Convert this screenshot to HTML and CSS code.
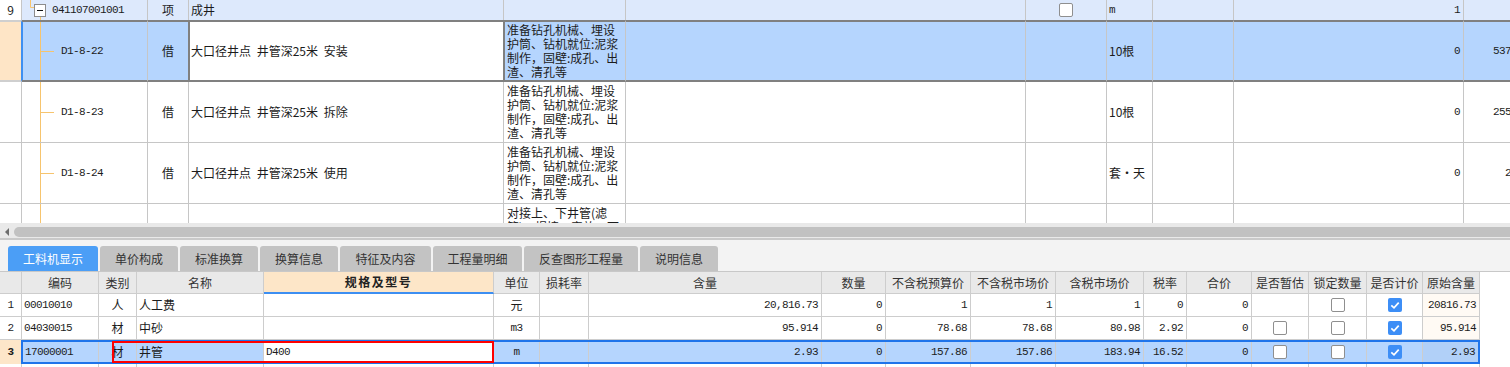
FILE: index.html
```html
<!DOCTYPE html>
<html lang="zh-CN">
<head>
<meta charset="utf-8">
<title>工料机显示</title>
<link rel="stylesheet" href="styles.css">
</head>
<body>
<div class="tgrid">
  <div class="trow r9">
    <div class="c rn">9</div>
    <div class="c root"><svg class="node" width="30" height="20" viewBox="0 0 30 20"><path d="M8.5 0V7.5H12" stroke="#f6c46e" fill="none"/><rect x="12.5" y="4.5" width="11" height="12" fill="#fff" stroke="#8c8c8c"/><path d="M15 10.5H21" stroke="#111"/><path d="M18.5 17V20" stroke="#f6c46e"/></svg><span class="mono">041107001001</span></div>
    <div class="c ctr">项</div>
    <div class="c pl">成井</div>
    <div class="c"></div>
    <div class="c"></div>
    <div class="c ctr"><span class="cb"></span></div>
    <div class="c pl mono">m</div>
    <div class="c"></div>
    <div class="c num mono">1</div>
    <div class="c num mono"></div>
  </div>
  <div class="trow sel">
    <div class="c rn"></div>
    <div class="c tree"><span class="mono">D1-8-22</span></div>
    <div class="c ctr type">借</div>
    <div class="c pl name">大口径井点 井管深25米 安装</div>
    <div class="c desc">准备钻孔机械、埋设<br>护筒、钻机就位:泥浆<br>制作，固壁:成孔、出<br>渣、清孔等</div>
    <div class="c"></div>
    <div class="c"></div>
    <div class="c pl">10根</div>
    <div class="c"></div>
    <div class="c num mono">0</div>
    <div class="c num mono">5375.33</div>
  </div>
  <div class="trow">
    <div class="c rn"></div>
    <div class="c tree"><span class="mono">D1-8-23</span></div>
    <div class="c ctr">借</div>
    <div class="c pl">大口径井点 井管深25米 拆除</div>
    <div class="c desc">准备钻孔机械、埋设<br>护筒、钻机就位:泥浆<br>制作，固壁:成孔、出<br>渣、清孔等</div>
    <div class="c"></div>
    <div class="c"></div>
    <div class="c pl">10根</div>
    <div class="c"></div>
    <div class="c num mono">0</div>
    <div class="c num mono">2557.41</div>
  </div>
  <div class="trow">
    <div class="c rn"></div>
    <div class="c tree"><span class="mono">D1-8-24</span></div>
    <div class="c ctr">借</div>
    <div class="c pl">大口径井点 井管深25米 使用</div>
    <div class="c desc">准备钻孔机械、埋设<br>护筒、钻机就位:泥浆<br>制作，固壁:成孔、出<br>渣、清孔等</div>
    <div class="c"></div>
    <div class="c"></div>
    <div class="c pl">套·天</div>
    <div class="c"></div>
    <div class="c num mono">0</div>
    <div class="c num mono">26.88</div>
  </div>
  <div class="trow last">
    <div class="c rn"></div>
    <div class="c tree top"></div>
    <div class="c"></div>
    <div class="c"></div>
    <div class="c desc top">对接上、下井管(滤<br>管)、焊接、安放、下<br>管、填滤料等</div>
    <div class="c"></div>
    <div class="c"></div>
    <div class="c"></div>
    <div class="c"></div>
    <div class="c"></div>
    <div class="c"></div>
  </div>
</div>

<div class="hscroll"><span class="arrow"></span><span class="thumb"></span></div>

<div class="tabs">
  <div class="tab on w1">工料机显示</div>
  <div class="tab w2">单价构成</div>
  <div class="tab w2">标准换算</div>
  <div class="tab w2">换算信息</div>
  <div class="tab w3">特征及内容</div>
  <div class="tab w4">工程量明细</div>
  <div class="tab w5">反查图形工程量</div>
  <div class="tab w2">说明信息</div>
</div>

<div class="bgrid">
  <div class="brow hd">
    <div class="bc"></div>
    <div class="bc ctr">编码</div>
    <div class="bc ctr">类别</div>
    <div class="bc ctr">名称</div>
    <div class="bc ctr act">规格及型号</div>
    <div class="bc ctr">单位</div>
    <div class="bc ctr">损耗率</div>
    <div class="bc ctr">含量</div>
    <div class="bc ctr">数量</div>
    <div class="bc ctr">不含税预算价</div>
    <div class="bc ctr">不含税市场价</div>
    <div class="bc ctr">含税市场价</div>
    <div class="bc ctr">税率</div>
    <div class="bc ctr">合价</div>
    <div class="bc ctr">是否暂估</div>
    <div class="bc ctr">锁定数量</div>
    <div class="bc ctr">是否计价</div>
    <div class="bc ctr">原始含量</div>
  </div>
  <div class="brow">
    <div class="bc ctr mono">1</div>
    <div class="bc pl mono">00010010</div>
    <div class="bc ctr">人</div>
    <div class="bc pl">人工费</div>
    <div class="bc"></div>
    <div class="bc ctr">元</div>
    <div class="bc"></div>
    <div class="bc num mono">20,816.73</div>
    <div class="bc num mono">0</div>
    <div class="bc num mono">1</div>
    <div class="bc num mono">1</div>
    <div class="bc num mono">1</div>
    <div class="bc num mono">0</div>
    <div class="bc num mono">0</div>
    <div class="bc"></div>
    <div class="bc ctr"><span class="cb"></span></div>
    <div class="bc ctr"><svg class="ck" width="14" height="14" viewBox="0 0 14 14"><rect width="14" height="14" rx="2" fill="#3d8ef6"/><path d="M3.3 7.3L6 9.8L10.7 4.6" stroke="#fff" stroke-width="1.7" fill="none"/></svg></div>
    <div class="bc num mono orig">20816.73</div>
  </div>
  <div class="brow">
    <div class="bc ctr mono">2</div>
    <div class="bc pl mono">04030015</div>
    <div class="bc ctr">材</div>
    <div class="bc pl">中砂</div>
    <div class="bc"></div>
    <div class="bc ctr mono">m3</div>
    <div class="bc"></div>
    <div class="bc num mono">95.914</div>
    <div class="bc num mono">0</div>
    <div class="bc num mono">78.68</div>
    <div class="bc num mono">78.68</div>
    <div class="bc num mono">80.98</div>
    <div class="bc num mono">2.92</div>
    <div class="bc num mono">0</div>
    <div class="bc ctr"><span class="cb"></span></div>
    <div class="bc ctr"><span class="cb"></span></div>
    <div class="bc ctr"><svg class="ck" width="14" height="14" viewBox="0 0 14 14"><rect width="14" height="14" rx="2" fill="#3d8ef6"/><path d="M3.3 7.3L6 9.8L10.7 4.6" stroke="#fff" stroke-width="1.7" fill="none"/></svg></div>
    <div class="bc num mono orig">95.914</div>
  </div>
  <div class="brow cur">
    <div class="bc ctr mono rn3">3</div>
    <div class="selwrap">
      <div class="bc pl mono">17000001</div>
      <div class="bc ctr">材</div>
      <div class="bc pl">井管</div>
      <div class="bc pl mono edit">D400</div>
      <div class="bc ctr mono">m</div>
      <div class="bc"></div>
      <div class="bc num mono">2.93</div>
      <div class="bc num mono">0</div>
      <div class="bc num mono">157.86</div>
      <div class="bc num mono">157.86</div>
      <div class="bc num mono">183.94</div>
      <div class="bc num mono">16.52</div>
      <div class="bc num mono">0</div>
      <div class="bc ctr"><span class="cb"></span></div>
      <div class="bc ctr"><span class="cb"></span></div>
      <div class="bc ctr"><svg class="ck" width="14" height="14" viewBox="0 0 14 14"><rect width="14" height="14" rx="2" fill="#3d8ef6"/><path d="M3.3 7.3L6 9.8L10.7 4.6" stroke="#fff" stroke-width="1.7" fill="none"/></svg></div>
      <div class="bc num mono orig3">2.93</div>
    </div>
  </div>
  <div class="brow">
    <div class="bc"></div><div class="bc"></div><div class="bc"></div><div class="bc"></div><div class="bc"></div><div class="bc"></div><div class="bc"></div><div class="bc"></div><div class="bc"></div><div class="bc"></div><div class="bc"></div><div class="bc"></div><div class="bc"></div><div class="bc"></div><div class="bc"></div><div class="bc"></div><div class="bc"></div><div class="bc"></div>
  </div>
  <div class="mark"></div>
</div>
</body>
</html>
```
FILE: styles.css
```css
* { box-sizing: border-box; }
html, body { margin: 0; padding: 0; }
body {
  width: 1510px;
  height: 367px;
  overflow: hidden;
  background: #f3f3f3;
  font-family: "Noto Sans CJK SC", sans-serif;
  font-size: 12px;
  line-height: 14px;
  color: #1c1c1c;
}
.mono {
  font-family: "Liberation Mono", monospace;
  font-size: 11px;
  letter-spacing: -0.6px;
}

/* ---------- top grid ---------- */
.tgrid { height: 223px; overflow: hidden; background: #fff; }
.trow {
  display: grid;
  grid-template-columns: 22px 126px 41px 315px 122px 400px 81px 46px 81px 230px 75px;
  width: 1539px;
  height: 61px;
  border-bottom: 1px solid #c6c6c6;
}
.trow.r9 { height: 20px; border-bottom: 0; background: #dde9fc; }
.trow.sel { height: 62px; border-bottom: 0; background: #b5d5fe; }
.trow.last { height: 80px; border-bottom: 0; }
.c {
  display: flex;
  align-items: center;
  min-width: 0;
  overflow: hidden;
  white-space: nowrap;
  border-right: 1px solid #c6c6c6;
}
.c.ctr { justify-content: center; }
.c.pl { padding-left: 2px; word-spacing: 3px; }
.c.num { justify-content: flex-end; padding-right: 3px; }
.rn { justify-content: center; background: #fff; }
.sel .c { border-top: 2px solid #808080; border-bottom: 2px solid #808080; }
.sel .c.rn {
  background: #fee5c6;
  border-top-color: #cfcfcf;
  border-bottom-color: #cfcfcf;
  border-right-color: #3d8ff2;
}
.sel .tree { box-shadow: inset 1px 0 #3d8ff2; }
.sel .type { border-right-color: #808080; }
.sel .name { background: #fff; box-shadow: inset 1px 0 #808080; border-right-color: #808080; }
.sel .desc { box-shadow: inset 1px 0 #808080; }
.root { align-items: flex-start; }
.root .node { flex: none; display: block; }
.root .mono { line-height: 20px; }
.tree {
  padding-left: 39px;
  background:
    linear-gradient(#f6c46e, #f6c46e) 18px 0 / 1px 100% no-repeat,
    linear-gradient(#f6c46e, #f6c46e) 19px 50% / 13px 1px no-repeat;
}
.desc {
  padding-left: 3px;
  white-space: nowrap;
  line-height: 14px;
}
.c.top { align-items: flex-start; padding-top: 2px; }

/* ---------- scrollbar ---------- */
.hscroll {
  display: flex;
  align-items: center;
  height: 17px;
  padding: 4px 0 1px 5px;
  background: #e9e9e9;
  border-bottom: 2px solid #c9c9c9;
}
.arrow {
  width: 0;
  height: 0;
  border-top: 4px solid transparent;
  border-bottom: 4px solid transparent;
  border-right: 4px solid #6d6d6d;
}
.thumb {
  flex: 1;
  height: 10px;
  margin-left: 5px;
  background: #c1c1c1;
  border-radius: 5px 0 0 5px;
}

/* ---------- tabs ---------- */
.tabs {
  display: flex;
  align-items: flex-end;
  gap: 2px;
  height: 31px;
  padding-left: 8px;
  background: #f3f3f3;
}
.tab {
  height: 25px;
  display: flex;
  align-items: center;
  justify-content: center;
  background: #c3c3c3;
  color: #333;
  font-size: 12px;
  border-radius: 3px 3px 0 0;
}
.tab.on { background: #4b9ef6; color: #fff; }
.w1 { width: 90px; }
.w2 { width: 78px; }
.w3 { width: 91px; }
.w4 { width: 89px; }
.w5 { width: 114px; }

/* ---------- bottom grid ---------- */
.bgrid {
  position: relative;
  height: 96px;
  overflow: hidden;
  background: #fff;
  border-top: 1px solid #c8c8c8;
}
.brow {
  display: grid;
  grid-template-columns: 22px 77px 38px 127px 230px 46px 49px 233px 64px 85px 85px 88px 43px 65px 57px 58px 56px 57px;
  width: 1480px;
  height: 23px;
}
.brow.hd { height: 22px; }
.bc {
  display: flex;
  align-items: center;
  min-width: 0;
  overflow: hidden;
  white-space: nowrap;
  border-right: 1px solid #cdcdcd;
  border-bottom: 1px solid #cdcdcd;
}
.hd .bc { background: #e9e9e9; color: #333; }
.hd .bc.act {
  background: #fde6c8;
  border-bottom: 2px solid #3d8ff2;
  font-weight: bold;
  letter-spacing: 1.5px;
  color: #222;
}
.bc.ctr { justify-content: center; }
.bc.pl { padding-left: 2px; }
.bc.num { justify-content: flex-end; padding-right: 3px; }
.bc.orig { background: #fffaf4; }
.brow.cur {
  grid-template-columns: 21px 1459px;
  height: 24px;
}
.brow.cur .rn3 {
  border: 0;
  background: #fde6c9;
  font-weight: bold;
}
.selwrap {
  display: grid;
  grid-template-columns: 76px 38px 127px 230px 46px 49px 233px 64px 85px 85px 88px 43px 65px 57px 58px 56px 55px;
  border: 2px solid #1f74ea;
  background: #b5d5fe;
}
.selwrap .bc { border-bottom: 0; }
.selwrap .bc:last-child { border-right: 0; background: #b1d0f8; }
.selwrap .edit { background: #fff; }
.cb {
  display: block;
  width: 14px;
  height: 14px;
  border: 1px solid #8f8f8f;
  border-radius: 2px;
  background: #fff;
}
.ck { display: block; }
.mark {
  position: absolute;
  left: 112px;
  top: 69px;
  width: 382px;
  height: 22px;
  border: 2px solid #ff0000;
}
```
